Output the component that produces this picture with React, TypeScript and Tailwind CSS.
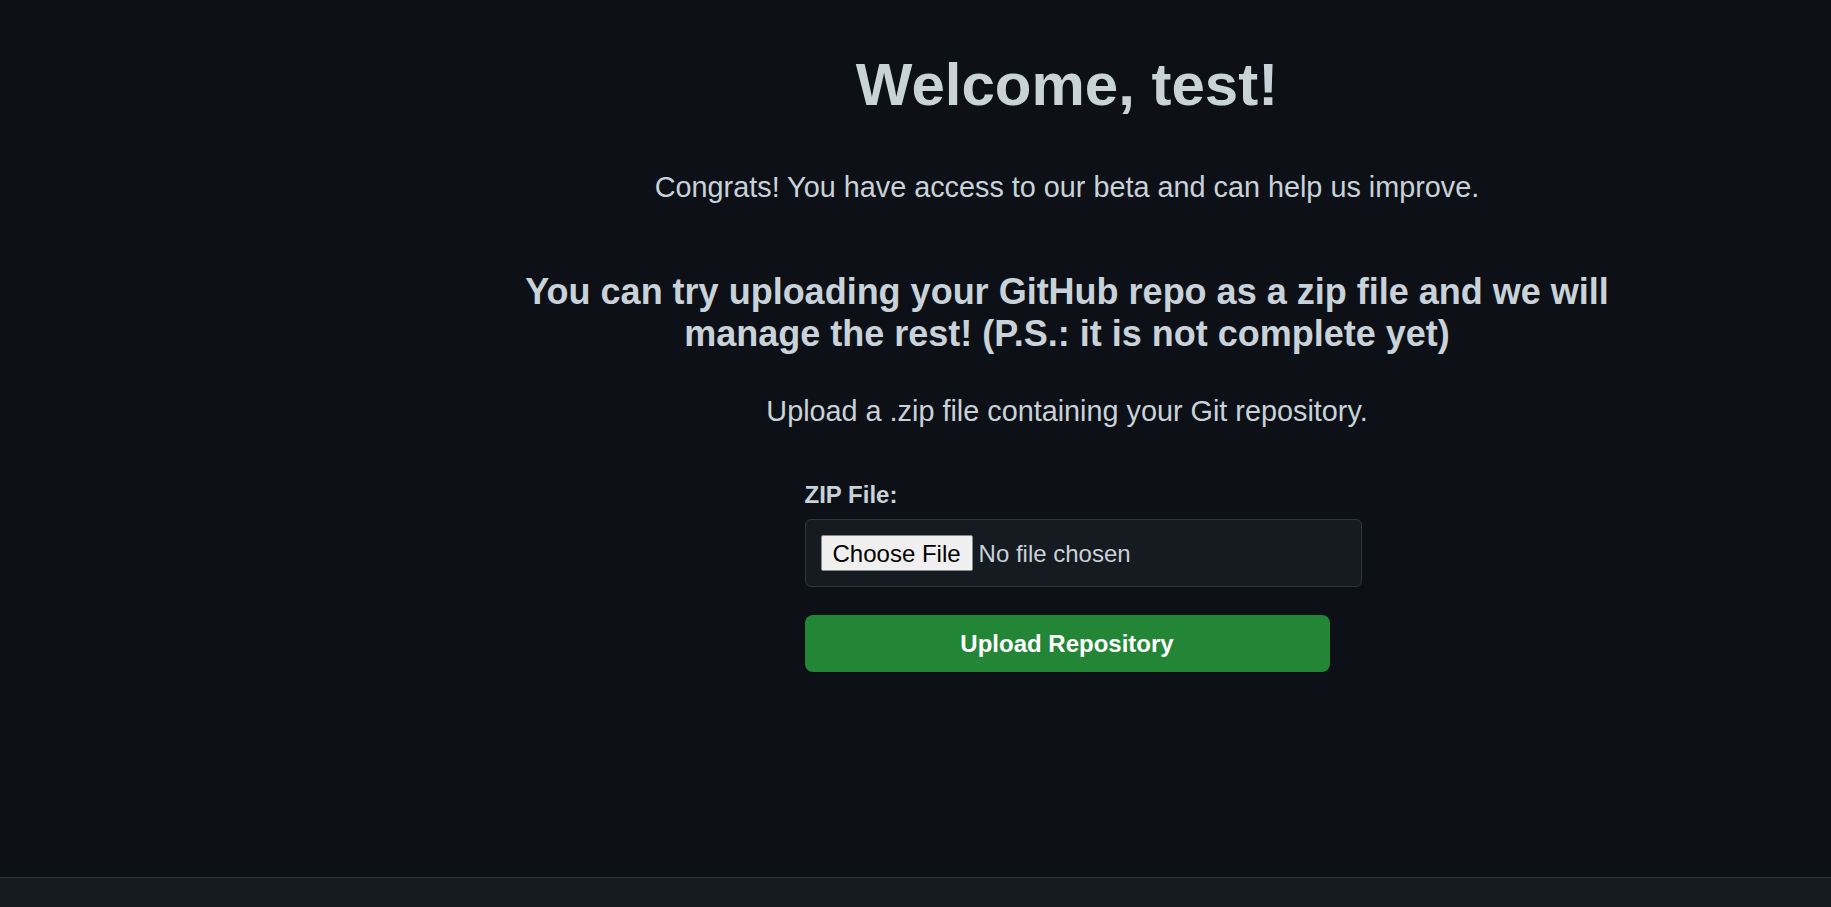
import React, { useState } from 'react';

const App: React.FC = () => {
    const [file, setFile] = useState<File | null>(null);

    const handleSubmit = (e: React.FormEvent) => {
        e.preventDefault();
        if (!file) return;
        console.log('uploading', file.name);
    };

    return (
        <div className="min-h-screen bg-[#0d1117] text-[#c9d1d9] font-['Liberation_Sans',Arial,sans-serif] flex flex-col">
            <div className="flex h-[877px]">
                {/* sidebar spacer */}
                <aside className="w-[303px] shrink-0" />

                <main className="flex-1 flex flex-col items-center text-center">
                    <h1 className="mt-[50px] text-[60px] leading-[69px] font-bold">Welcome, test!</h1>

                    <p className="mt-[52px] text-[28.8px] leading-[33px]">
                        Congrats! You have access to our beta and can help us improve.
                    </p>

                    <h2 className="mt-[67px] max-w-[1200px] text-[36px] leading-[41.6px] font-bold">
                        You can try uploading your GitHub repo as a zip file and we will manage the rest! (P.S.: it is not complete yet)
                    </h2>

                    <p className="mt-[41px] text-[28.8px] leading-[33px]">
                        Upload a .zip file containing your Git repository.
                    </p>

                    <form onSubmit={handleSubmit} className="mt-[53px] w-[525px] flex flex-col text-left">
                        <label htmlFor="zip" className="block text-[24px] leading-[27.6px] font-bold">
                            ZIP File:
                        </label>
                        <input
                            id="zip"
                            type="file"
                            accept=".zip"
                            onChange={(e) => setFile(e.target.files?.[0] ?? null)}
                            className="mt-[10px] box-content w-full h-[36px] p-[15px] border border-[#30363d] rounded-[6px] bg-[#161b22] text-[24px] leading-[36px] text-[#c9d1d9] file:h-[36px] file:px-[11px] file:mr-[6px] file:bg-[#efefef] file:text-black file:border file:border-solid file:border-[#8a8a8a] file:rounded-[2px]"
                        />
                        <button
                            type="submit"
                            className="mt-[28px] w-full py-[15px] text-[24px] leading-[27.6px] font-bold text-white bg-[#238636] rounded-[8px]"
                        >
                            Upload Repository
                        </button>
                    </form>
                </main>
            </div>

            <footer className="h-[30px] border-t border-[#30363d] bg-[#161b22]" />
        </div>
    );
};

export default App;
